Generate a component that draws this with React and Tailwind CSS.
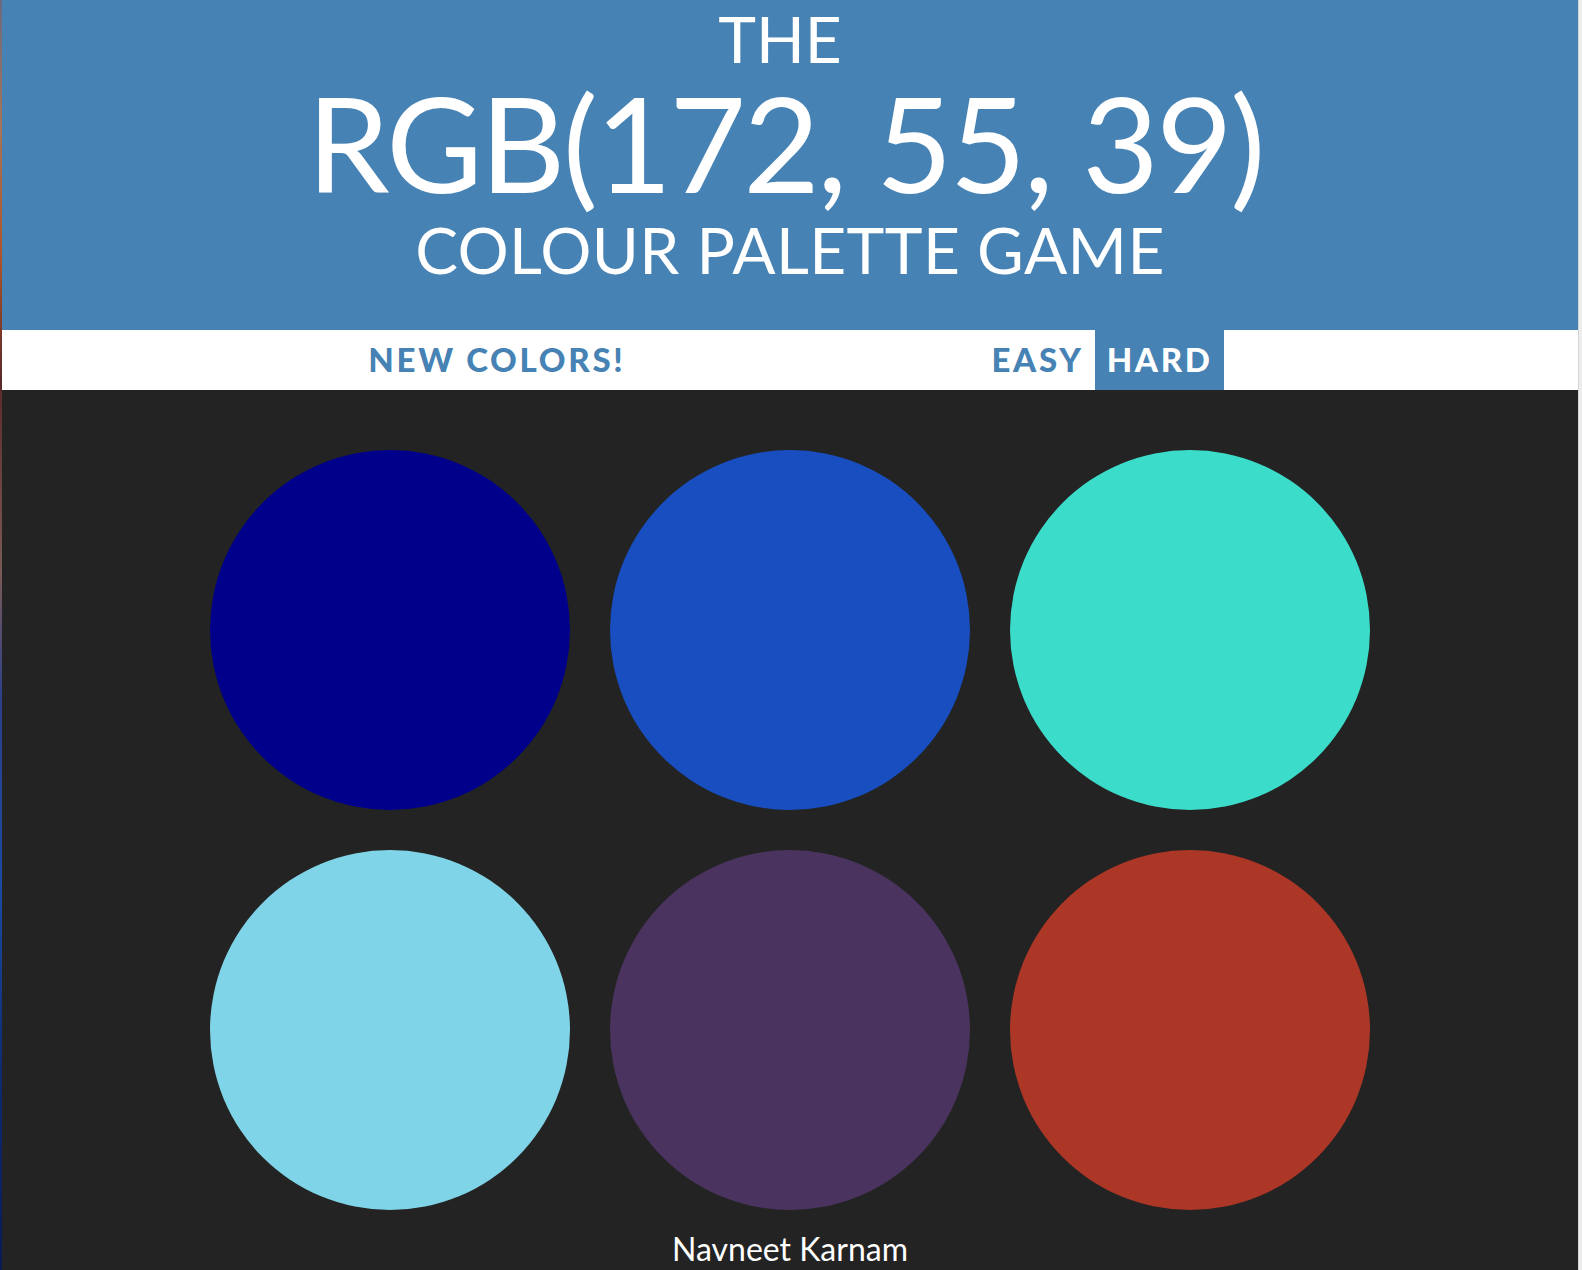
import React, { useState } from 'react';

const swatches = [
  'bg-[#00008b]',
  'bg-[#184ebf]',
  'bg-[#3cdccb]',
  'bg-[#80d4e8]',
  'bg-[#4a345f]',
  'bg-[#ac3727]',
];

const App = () => {
  const [mode, setMode] = useState('hard');

  return (
    <div className="flex h-[1270px] w-[1582px] overflow-hidden font-['Lato',sans-serif]">
      {/* desktop edge peeking through on the left */}
      <div className="w-[2px] shrink-0 bg-[linear-gradient(to_bottom,#6b6a80_0%,#a4745a_10%,#b0552a_20%,#5a2a2a_30%,#7a5a55_45%,#2c3f8a_55%,#1a4aa0_70%,#0d2a70_85%,#0a1a55_100%)]" />

      <div className="flex min-w-0 flex-1 flex-col bg-[#232323]">
        {/* Header */}
        <header className="h-[330px] bg-[#4682b4] text-center font-normal text-white">
          <div className="pr-[20px] text-[64px] leading-[77px]">THE</div>
          <div className="pr-[10px] text-[132px] leading-[130px] tracking-[-2.6px]">RGB(172, 55, 39)</div>
          <div className="text-[64px] leading-[86px] tracking-[0.4px]">COLOUR PALETTE GAME</div>
        </header>

        {/* Controls stripe */}
        <div className="flex h-[60px] items-stretch justify-center bg-white text-[33px] font-black tracking-[2.7px]">
          <button className="pl-[12px] pr-[11px] uppercase text-[#4682b4]">New Colors!</button>
          <span className="w-[343px]" />
          <button
            onClick={() => setMode('easy')}
            className={`pl-[12px] pr-[11px] uppercase ${mode === 'easy' ? 'bg-[#4682b4] text-white' : 'text-[#4682b4]'}`}
          >
            Easy
          </button>
          <button
            onClick={() => setMode('hard')}
            className={`pl-[12px] pr-[11px] uppercase ${mode === 'hard' ? 'bg-[#4682b4] text-white' : 'text-[#4682b4]'}`}
          >
            Hard
          </button>
        </div>

        {/* Swatches */}
        <div className="mx-auto mt-[40px] grid w-[1200px] grid-cols-3">
          {swatches.map((c, i) => (
            <div key={i} className={`m-[20px] h-[360px] w-[360px] rounded-full ${c}`} />
          ))}
        </div>

        <footer className="text-center text-[32px] leading-[38px] text-white">Navneet Karnam</footer>
      </div>

      {/* window edge on the right */}
      <div className="w-[4px] shrink-0 border-l border-[#d6d6d6] bg-[#ededed]" />
    </div>
  );
};

export default App;
